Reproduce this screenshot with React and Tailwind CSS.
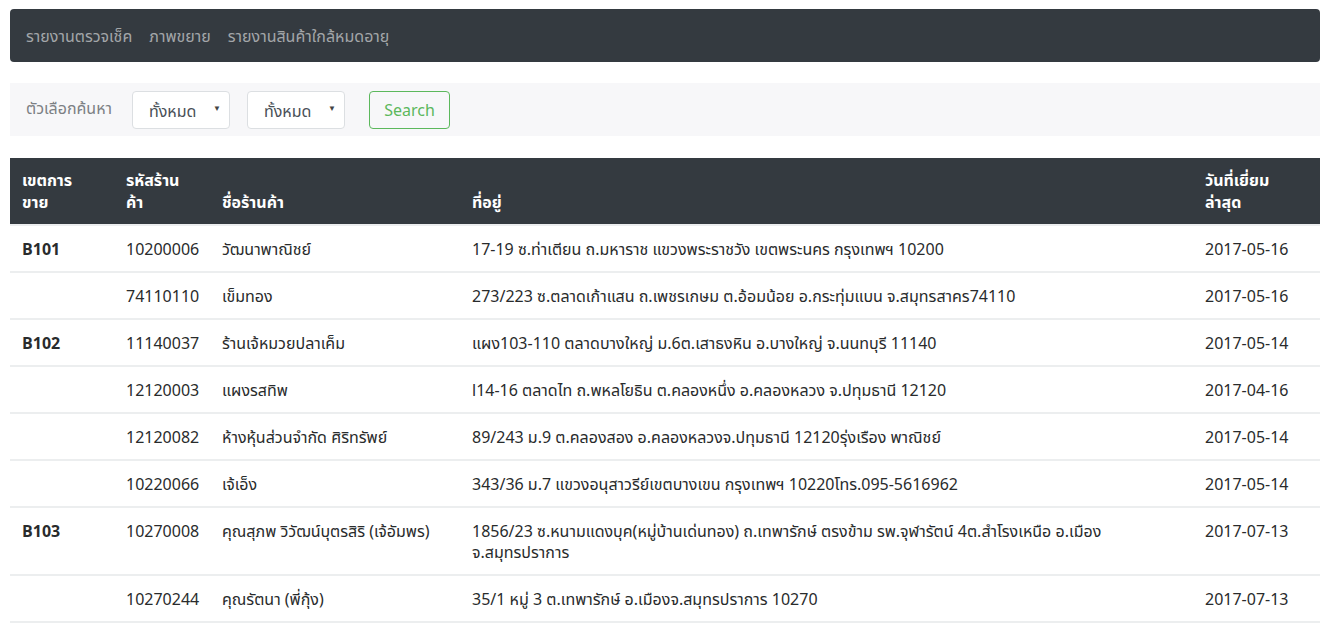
import { useState } from "react";

const rows = [
  { zone: "B101", code: "10200006", name: "วัฒนาพาณิชย์", addr: "17-19 ซ.ท่าเตียน ถ.มหาราช แขวงพระราชวัง เขตพระนคร กรุงเทพฯ 10200", date: "2017-05-16" },
  { zone: "", code: "74110110", name: "เข็มทอง", addr: "273/223 ซ.ตลาดเก้าแสน ถ.เพชรเกษม ต.อ้อมน้อย อ.กระทุ่มแบน จ.สมุทรสาคร74110", date: "2017-05-16" },
  { zone: "B102", code: "11140037", name: "ร้านเจ้หมวยปลาเค็ม", addr: "แผง103-110 ตลาดบางใหญ่ ม.6ต.เสาธงหิน อ.บางใหญ่ จ.นนทบุรี 11140", date: "2017-05-14" },
  { zone: "", code: "12120003", name: "แผงรสทิพ", addr: "l14-16 ตลาดไท ถ.พหลโยธิน ต.คลองหนึ่ง อ.คลองหลวง จ.ปทุมธานี 12120", date: "2017-04-16" },
  { zone: "", code: "12120082", name: "ห้างหุ้นส่วนจำกัด ศิริทรัพย์", addr: "89/243 ม.9 ต.คลองสอง อ.คลองหลวงจ.ปทุมธานี 12120รุ่งเรือง พาณิชย์", date: "2017-05-14" },
  { zone: "", code: "10220066", name: "เจ้เอ็ง", addr: "343/36 ม.7 แขวงอนุสาวรีย์เขตบางเขน กรุงเทพฯ 10220โทร.095-5616962", date: "2017-05-14" },
  { zone: "B103", code: "10270008", name: "คุณสุภพ วิวัฒน์บุตรสิริ (เจ้อัมพร)", addr: "1856/23 ซ.หนามแดงบุค(หมู่บ้านเด่นทอง) ถ.เทพารักษ์ ตรงข้าม รพ.จุฬารัตน์ 4ต.สำโรงเหนือ อ.เมือง จ.สมุทรปราการ", date: "2017-07-13" },
  { zone: "", code: "10270244", name: "คุณรัตนา (พี่กุ้ง)", addr: "35/1 หมู่ 3 ต.เทพารักษ์ อ.เมืองจ.สมุทรปราการ 10270", date: "2017-07-13" },
];

const Select = ({ value }) => (
  <div className="relative w-[98px] h-[38px] bg-white border border-[#dcdfe2] rounded-[4px] flex items-center pl-[16px] text-[#495057]">
    <span className="mt-[5px]">{value}</span>
    <span className="absolute right-[8px] top-[13px] text-[8px] leading-none text-[#444]">▼</span>
  </div>
);

const App = () => {
  const [zone] = useState("ทั้งหมด");

  return (
    <div className="px-[10px] pt-[9px] text-[16px] leading-[21px] text-[#292b2c] bg-white min-h-screen" style={{ fontFamily: '"Segoe UI", "Noto Sans Thai", "Noto Sans", Leelawadee, Tahoma, sans-serif' }}>
      <nav className="h-[53px] bg-[#343a40] rounded-[4px] flex items-center px-[16px] pt-[4px] gap-[17px] text-[#a3a6a9]">
        <a>รายงานตรวจเช็ค</a>
        <a>ภาพขยาย</a>
        <a>รายงานสินค้าใกล้หมดอายุ</a>
      </nav>

      <div className="mt-[21px] h-[53px] bg-[#f7f7f9] flex items-center px-[16px] text-[#7c8084]">
        <span className="w-[106px] shrink-0">ตัวเลือกค้นหา</span>
        <Select value={zone} />
        <div className="w-[17px]" />
        <Select value={zone} />
        <button className="ml-[24px] h-[38px] w-[81px] pt-[3px] border border-[#5cb85c] rounded-[4px] text-[#5cb85c] bg-transparent">
          Search
        </button>
      </div>

      <table className="mt-[22px] w-full table-fixed border-collapse">
        <colgroup>
          <col className="w-[104px]" />
          <col className="w-[96px]" />
          <col className="w-[250px]" />
          <col />
          <col className="w-[127px]" />
        </colgroup>
        <thead>
          <tr className="bg-[#343a40] text-white font-bold text-left leading-[22px]">
            <th className="px-[12px] pt-[12px] pb-[10px] align-bottom">เขตการ<br />ขาย</th>
            <th className="px-[12px] pt-[12px] pb-[10px] align-bottom">รหัสร้าน<br />ค้า</th>
            <th className="px-[12px] pt-[12px] pb-[10px] align-bottom">ชื่อร้านค้า</th>
            <th className="px-[12px] pt-[12px] pb-[10px] align-bottom">ที่อยู่</th>
            <th className="px-[12px] pt-[12px] pb-[10px] align-bottom">วันที่เยี่ยม<br />ล่าสุด</th>
          </tr>
        </thead>
        <tbody>
          {rows.map((r, i) => (
            <tr key={i} className="border-t-2 border-[#eceeef] align-top">
              <td className="px-[12px] pt-[14px] pb-[10px] font-bold">{r.zone}</td>
              <td className="px-[12px] pt-[14px] pb-[10px]">{r.code}</td>
              <td className="px-[12px] pt-[14px] pb-[10px]">{r.name}</td>
              <td className="px-[12px] pt-[14px] pb-[10px]">{r.addr}</td>
              <td className="px-[12px] pt-[14px] pb-[10px]">{r.date}</td>
            </tr>
          ))}
          <tr className="border-t-2 border-[#eceeef]"><td colSpan={5} /></tr>
        </tbody>
      </table>
    </div>
  );
};

export default App;
